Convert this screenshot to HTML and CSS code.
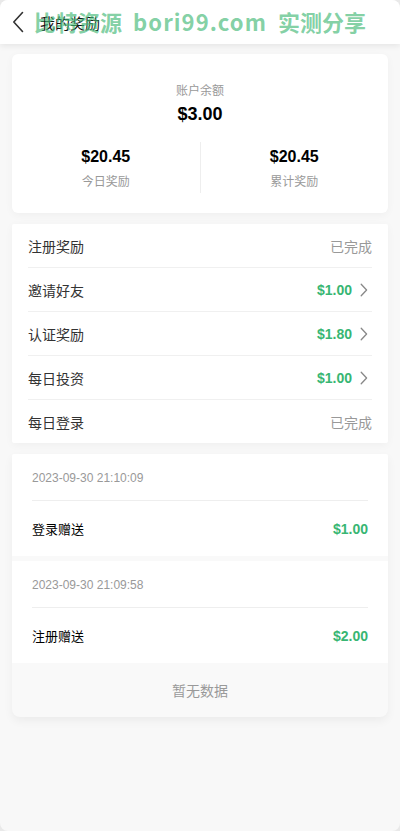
FILE: index.html
```html
<!DOCTYPE html>
<html lang="zh">
<head>
<meta charset="utf-8">
<link rel="stylesheet" href="styles.css">
</head>
<body>
<div class="page">
  <header class="nav">
    <svg class="back" width="12" height="22" viewBox="0 0 12 22"><path d="M10.5 1.5 L1.8 11 L10.5 20.5" fill="none" stroke="#333" stroke-width="1.6" stroke-linecap="round" stroke-linejoin="round"/></svg>
    <span class="title">我的奖励</span>
    <span class="watermark">比特资源 <span class="wm-latin">bori99.com</span> 实测分享</span>
  </header>

  <section class="card summary">
    <div class="bal-label">账户余额</div>
    <div class="bal-value">$3.00</div>
    <div class="stats">
      <div class="stat">
        <div class="stat-value">$20.45</div>
        <div class="stat-label">今日奖励</div>
      </div>
      <div class="stat">
        <div class="stat-value">$20.45</div>
        <div class="stat-label">累计奖励</div>
      </div>
    </div>
  </section>

  <section class="card tasks">
    <div class="task"><span class="task-name">注册奖励</span><span class="done">已完成</span></div>
    <div class="task"><span class="task-name">邀请好友</span><span class="amt">$1.00<svg class="chev" width="8" height="14" viewBox="0 0 8 14"><path d="M1.2 1.2 L6.6 7 L1.2 12.8" fill="none" stroke="#888" stroke-width="1.3" stroke-linecap="round" stroke-linejoin="round"/></svg></span></div>
    <div class="task"><span class="task-name">认证奖励</span><span class="amt">$1.80<svg class="chev" width="8" height="14" viewBox="0 0 8 14"><path d="M1.2 1.2 L6.6 7 L1.2 12.8" fill="none" stroke="#888" stroke-width="1.3" stroke-linecap="round" stroke-linejoin="round"/></svg></span></div>
    <div class="task"><span class="task-name">每日投资</span><span class="amt">$1.00<svg class="chev" width="8" height="14" viewBox="0 0 8 14"><path d="M1.2 1.2 L6.6 7 L1.2 12.8" fill="none" stroke="#888" stroke-width="1.3" stroke-linecap="round" stroke-linejoin="round"/></svg></span></div>
    <div class="task"><span class="task-name">每日登录</span><span class="done">已完成</span></div>
  </section>

  <section class="card records">
    <div class="record">
      <div class="rec-date">2023-09-30 21:10:09</div>
      <div class="rec-row"><span class="rec-name">登录赠送</span><span class="rec-amt">$1.00</span></div>
    </div>
    <div class="record">
      <div class="rec-date">2023-09-30 21:09:58</div>
      <div class="rec-row"><span class="rec-name">注册赠送</span><span class="rec-amt">$2.00</span></div>
    </div>
    <div class="empty">暂无数据</div>
  </section>
</div>
</body>
</html>
```

FILE: styles.css
```css
* { box-sizing: border-box; }
html, body { margin: 0; padding: 0; background: #e9e9e9; }
body {
  font-family: "Liberation Sans", "Noto Sans CJK SC", sans-serif;
  color: #333;
}
.page {
  width: 400px;
  min-height: 831px;
  background: #f8f8f8;
  border-radius: 8px;
  overflow: hidden;
  padding-bottom: 20px;
}
.nav {
  position: relative;
  height: 44px;
  background: #fff;
  display: flex;
  align-items: center;
  padding-left: 12px;
  box-shadow: 0 2px 6px rgba(0,0,0,0.08);
}
.back { display: block; }
.title {
  margin-left: 16px;
  font-size: 15px;
  color: #111;
  font-family: "Noto Sans CJK SC", sans-serif;
}
.watermark {
  position: absolute;
  left: 34px;
  top: 6px;
  font-size: 22px;
  font-weight: bold;
  line-height: 30px;
  color: rgba(70, 185, 120, 0.68);
  font-family: "Noto Sans CJK SC", sans-serif;
  white-space: nowrap;
  word-spacing: 6px;
}
.wm-latin { letter-spacing: 1.1px; }
.card {
  margin: 10px 12px 0;
  background: #fff;
  border-radius: 6px;
  box-shadow: 0 2px 8px rgba(0,0,0,0.04);
}
.summary {
  padding: 27px 0 20px;
  text-align: center;
}
.bal-label {
  font-size: 12px;
  color: #999;
  line-height: 17px;
  font-family: "Noto Sans CJK SC", sans-serif;
}
.bal-value {
  font-size: 18px;
  font-weight: bold;
  color: #000;
  line-height: 24px;
  margin-top: 4px;
}
.stats {
  display: flex;
  margin-top: 16px;
}
.stat {
  flex: 1;
  padding: 4px 0 4px;
}
.stat + .stat { border-left: 1px solid #eee; }
.stat-value {
  font-size: 16px;
  font-weight: bold;
  color: #000;
  line-height: 22px;
}
.stat-label {
  font-size: 12px;
  color: #999;
  line-height: 17px;
  margin-top: 4px;
  font-family: "Noto Sans CJK SC", sans-serif;
}
.tasks { margin-top: 11px; padding: 0 16px; border-radius: 2px; }
.task {
  height: 44px;
  display: flex;
  align-items: center;
  justify-content: space-between;
  border-bottom: 1px solid #f0f0f0;
}
.task:last-child { border-bottom: none; height: 43px; }
.task-name {
  font-size: 14px;
  color: #333;
  font-family: "Noto Sans CJK SC", sans-serif;
}
.done {
  font-size: 14px;
  color: #999;
  font-family: "Noto Sans CJK SC", sans-serif;
}
.amt {
  display: flex;
  align-items: center;
  font-size: 14px;
  font-weight: bold;
  color: #38b673;
}
.chev { margin-left: 8px; margin-right: 4px; }
.records {
  margin-top: 11px;
  background: #f9f9f9;
  overflow: hidden;
  border-radius: 2px 2px 8px 8px;
  box-shadow: 0 4px 10px rgba(0,0,0,0.05);
}
.record {
  background: #fff;
  padding: 0 20px;
}
.record + .record { margin-top: 5px; }
.rec-date {
  height: 47px;
  padding-top: 2px;
  display: flex;
  align-items: center;
  font-size: 12px;
  color: #999;
  border-bottom: 1px solid #eee;
}
.rec-row {
  height: 55px;
  display: flex;
  align-items: center;
  justify-content: space-between;
}
.rec-name {
  font-size: 13px;
  color: #000;
  font-family: "Noto Sans CJK SC", sans-serif;
}
.rec-amt {
  font-size: 14px;
  font-weight: bold;
  color: #38b673;
}
.empty {
  height: 54px;
  display: flex;
  align-items: center;
  justify-content: center;
  font-size: 14px;
  color: #999;
  font-family: "Noto Sans CJK SC", sans-serif;
}
```
